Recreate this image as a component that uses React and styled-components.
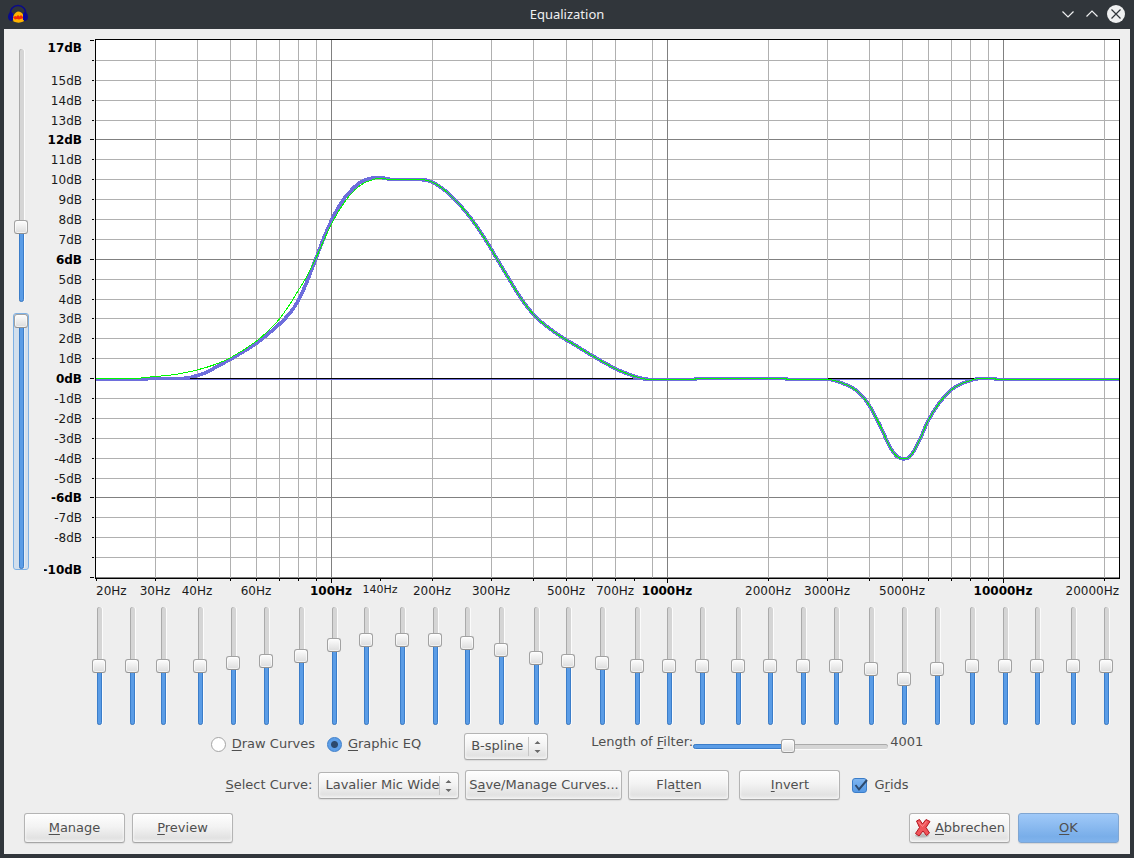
import React, { useState } from "react";
import styled, { createGlobalStyle, css } from "styled-components";

const GlobalStyle = createGlobalStyle`
  * { box-sizing: border-box; }
  body { margin: 0; background: #31363b; }
  body, button, select, input {
    font-family: "DejaVu Sans", sans-serif;
    font-size: 13px;
    line-height: 16px;
    color: #4f4f4f;
  }
  u { text-underline-offset: 2px; text-decoration-thickness: 1px; }
`;

/* ---------- window frame ---------- */

const Frame = styled.div`
  min-height: 100vh;
  display: flex;
  flex-direction: column;
  background: #31363b;
  padding: 0 4px 4px;
`;

const TitleBar = styled.header`
  height: 29px;
  display: grid;
  grid-template-columns: 1fr auto 1fr;
  align-items: center;
  padding: 0 4px 2px;
`;

const Title = styled.h1`
  margin: 0;
  font: 400 13px/20px "Noto Sans", sans-serif;
  color: #eff0f1;
`;

const WindowButtons = styled.div`
  display: flex;
  justify-content: flex-end;
  gap: 4px;
`;

const WindowButton = styled.button`
  width: 20px;
  height: 20px;
  padding: 0;
  border: 0;
  background: none;
  svg { display: block; }
`;

const Content = styled.main`
  flex: 1;
  display: flex;
  flex-direction: column;
  background: #eeeeee;
`;

/* ---------- sliders ---------- */

const thumb = css`
  appearance: none;
  width: 14px;
  height: 14px;
  border: 1px solid #a2a2a2;
  border-bottom-color: #929292;
  border-radius: 3px;
  background: linear-gradient(#fdfdfd, #dcdcdc);
  box-shadow: inset 0 0 0 1px rgba(255, 255, 255, 0.6);
`;

const SliderBox = styled.span`
  display: grid;
  width: ${(p) => (p.$vertical ? "14px" : p.$length)};
  height: ${(p) => (p.$vertical ? p.$length : "14px")};
  > * { grid-area: 1 / 1; }
  ${(p) =>
    p.$focused &&
    css`
      outline: 1px solid #7db0e4;
      border-radius: 2px;
      background: #d2dfed;
    `}
`;

const Groove = styled.span`
  display: flex;
  border-radius: 3px;
  background: #d5d5d5;
  ${(p) =>
    p.$vertical
      ? css`
          flex-direction: column;
          justify-content: flex-end;
          width: 5px;
          margin-left: 5px;
          box-shadow: inset 1px 0 0 #aaaaaa, 1px 0 0 ${p.$focused ? "#e4edf6" : "#fbfbfb"};
        `
      : css`
          height: 5px;
          margin-top: 5px;
          box-shadow: inset 0 1px 0 #aaaaaa, 0 1px 0 #fbfbfb;
        `}
`;

const Fill = styled.span`
  border: 1px solid #3b7dc9;
  border-radius: 3px;
  background: #5a9ce6;
`;

const Range = styled.input`
  appearance: none;
  margin: 0;
  padding: 0;
  background: none;
  outline: none;
  width: 100%;
  height: 100%;
  ${(p) => p.$vertical && css`writing-mode: vertical-lr; direction: rtl;`}
  &::-webkit-slider-runnable-track { appearance: none; background: none; }
  &::-webkit-slider-thumb { ${thumb} }
`;

function Slider({ id, label, min, max, initial, vertical = false, length, focused = false }) {
  const [value, setValue] = useState(initial);
  const percent = ((value - min) / (max - min)) * 100 + "%";
  return (
    <SliderBox $vertical={vertical} $length={length} $focused={focused}>
      <Groove $vertical={vertical} $focused={focused}>
        <Fill style={vertical ? { height: percent } : { width: percent }} />
      </Groove>
      <Range
        id={id}
        type="range"
        aria-label={label}
        $vertical={vertical}
        min={min}
        max={max}
        value={value}
        onChange={(e) => setValue(Number(e.target.value))}
      />
    </SliderBox>
  );
}

/* ---------- response chart ---------- */

const GraphArea = styled.section`
  display: flex;
  gap: 16px;
  padding: 7px 10px 0 10px;
`;

const RangeSliders = styled.div`
  display: flex;
  flex-direction: column;
  gap: 12px;
  padding-top: 13px;
`;

const ChartSvg = styled.svg`
  flex: 1;
  min-width: 0;
  display: block;
  height: auto;
  font-family: "DejaVu Sans", sans-serif;
  .crisp { shape-rendering: crispEdges; }
`;

const Tick = styled.text`
  font-size: ${(p) => (p.$small ? "11px" : "12px")};
  font-weight: ${(p) => (p.$major ? 700 : 400)};
  fill: ${(p) => (p.$major ? "#000" : "#1a1a1a")};
`;

const freqX = (f) => Math.floor(331.5 + 336 * (Math.log10(f) - 2));
const dbY = (db) => Math.round(40 + ((17 - db) * 537) / 27);

const DB_VALUES = Array.from({ length: 28 }, (_, i) => 17 - i);
const FREQUENCIES = [
  20, 30, 40, 50, 60, 70, 80, 90, 100, 200, 300, 400, 500, 600, 700, 900, 1000,
  2000, 3000, 4000, 5000, 6000, 7000, 8000, 9000, 10000, 20000,
];
const TICKS = FREQUENCIES.filter((f) => f !== 900).concat([140, 800]);
const MAJOR = [100, 1000, 10000];
const HZ_LABELS = [
  30, 40, 60, 100, 140, 200, 300, 500, 700, 1000, 2000, 3000, 5000, 10000,
];

const isMajorDb = (db) => db % 6 === 0 || db === 17 || db === -10;

const TAIL = [
  [392, 179.5], [420, 179.5], [432, 182], [445, 190.5], [458, 203], [470, 217],
  [485, 239], [500, 264], [515, 289], [525, 304], [535, 316], [545, 325],
  [560, 336], [575, 345], [592, 355.5], [615, 368.5], [628, 374], [640, 378],
  [650, 379.5], [694, 379.5], [697, 378.5], [783, 378.5], [790, 379.5],
  [828, 379.5], [842, 383], [857, 391], [869, 405], [880, 425.5], [890, 447],
  [897, 456.5], [904, 459], [910, 456.5], [915, 449], [921, 437],
  [928, 421], [939, 403.5], [951, 390], [962, 383.5],
  [972, 380], [980, 378.5], [994, 378.5], [997, 379.5], [1119, 379.5],
];
const DRAWN = [
  [96, 379.5], [143, 379.5], [150, 378.5], [180, 378.5], [190, 377.5],
  [205, 373], [217, 366.5], [230, 359.5], [256, 343.5], [279, 324.5],
  [290, 313], [298, 301], [306, 284], [315, 261], [323, 240], [331, 221.5],
  [338, 208], [345, 197.5], [352, 189.5], [360, 182.5], [370, 178.5],
  [380, 177.5], ...TAIL,
];
const ACTUAL = [
  [96, 378.5], [133, 378.5], [150, 377], [175, 374.5], [197, 370],
  [215, 364.5], [230, 358], [256, 341.5], [270, 329], [279, 319.5],
  [290, 304], [298, 291], [307, 276], [315, 260], [324, 240],
  [331, 225], [340, 209], [350, 195], [360, 185.5], [370, 180.5],
  [380, 178.5], ...TAIL,
];

function smoothPath(points) {
  let d = `M${points[0][0]} ${points[0][1]}`;
  const slope = (i) => {
    if (i === 0 || i === points.length - 1) return 0;
    const [x0, y0] = points[i - 1];
    const [x1, y1] = points[i];
    const [x2, y2] = points[i + 1];
    return (y1 - y0) * (y2 - y1) <= 0 ? 0 : (y2 - y0) / (x2 - x0);
  };
  for (let i = 0; i < points.length - 1; i++) {
    const [x1, y1] = points[i];
    const [x2, y2] = points[i + 1];
    const h = (x2 - x1) / 3;
    d += `C${x1 + h} ${y1 + slope(i) * h} ${x2 - h} ${y2 - slope(i + 1) * h} ${x2} ${y2}`;
  }
  return d;
}

/* The outermost labels are kept inside the plot's height. */
function dbBaseline(db) {
  if (db === 17) return 52;
  if (db === -10) return 574;
  return dbY(db) + 5;
}

function Chart() {
  return (
    <ChartSvg viewBox="44 36 1076 564" role="img" aria-label="Frequency response">
      <g className="crisp">
        <rect x="95" y="39" width="1025" height="540" fill="#000" />
        <rect x="96" y="40" width="1023" height="538" fill="#fff" />
        {DB_VALUES.filter((db) => db < 17).map((db) => (
          <rect key={db} x="96" y={dbY(db)} width="1023" height="1"
            fill={isMajorDb(db) ? "#808080" : "#b0b0b0"} />
        ))}
        {FREQUENCIES.filter((f) => f > 20).map((f) => (
          <rect key={f} x={freqX(f)} y="40" width="1" height="538"
            fill={MAJOR.includes(f) ? "#808080" : "#b0b0b0"} />
        ))}
        <rect x="96" y="379" width="1023" height="1" fill="#6e6edc" />
        {DB_VALUES.map((db) => (
          <rect key={db} x={isMajorDb(db) ? 90 : 92} y={dbY(db)}
            width={isMajorDb(db) ? 4 : 2} height="1" fill="#000" />
        ))}
        {TICKS.map((f) => (
          <rect key={f} x={freqX(f)} y="579" width="1"
            height={MAJOR.includes(f) ? 4 : 2} fill="#000" />
        ))}
        <path d={smoothPath(DRAWN)} fill="none" stroke="#6e6edc" strokeWidth="3.6" />
        <rect x="190" y="378" width="443" height="1" fill="#000" />
        <rect x="828" y="378" width="146" height="1" fill="#000" />
        <path d={smoothPath(ACTUAL)} fill="none" stroke="#00fa00" strokeWidth="1" />
      </g>
      {DB_VALUES.filter((db) => db !== 16 && db !== -9).map((db) => (
        <Tick key={db} x="82" y={dbBaseline(db)} textAnchor="end" $major={isMajorDb(db)}>
          {db}dB
        </Tick>
      ))}
      <Tick x="96" y="595">20Hz</Tick>
      {HZ_LABELS.map((f) => (
        <Tick key={f} x={freqX(f)} y={f === 140 ? 593 : 595} textAnchor="middle"
          $major={MAJOR.includes(f)} $small={f === 140}>
          {f}Hz
        </Tick>
      ))}
      <Tick x="1119" y="595" textAnchor="end">20000Hz</Tick>
    </ChartSvg>
  );
}

/* ---------- graphic EQ bands: frequency, gain, distance to the next ---------- */

const BANDS = [
  [20, 0, 33], [25, 0, 31], [31, 0, 37], [40, 0, 33], [50, 1, 33], [63, 2, 35],
  [80, 4, 33], [100, 8, 32], [125, 10, 36], [160, 10, 33], [200, 10, 32],
  [250, 9, 34], [315, 6, 35], [400, 3, 32], [500, 2, 34], [630, 1, 35],
  [800, 0, 32], [1000, 0, 33], [1250, 0, 36], [1600, 0, 32], [2000, 0, 33],
  [2500, 0, 33], [3150, 0, 35], [4000, -1, 33], [5000, -5, 33], [6300, -1, 35],
  [8000, 0, 33], [10000, 0, 32], [12500, 0, 36], [16000, 0, 33], [20000, 0, 0],
];

const BandRow = styled.section`
  display: grid;
  grid-template-columns: ${BANDS.slice(0, -1).map((b) => `minmax(0, ${b[2]}fr)`).join(" ")} 14px;
  padding: 7px 17px 1px 88px;
`;

/* ---------- controls ---------- */

const ControlRow = styled.div`
  display: flex;
  justify-content: center;
  align-items: center;
  white-space: nowrap;
  height: 30px;
  gap: ${(p) => p.$gap};
  margin-top: ${(p) => p.$top};
`;

const Group = styled.div`
  display: flex;
  align-items: center;
  gap: ${(p) => p.$gap};
`;

const ModeGroup = styled(Group)`
  padding-bottom: 4px;
`;

const InvertGroup = styled(Group)`
  padding-left: 4px;
`;

const ChoiceLabel = styled.label`
  display: flex;
  align-items: center;
  gap: 6px;
`;

const Radio = styled.input`
  appearance: none;
  width: 15px;
  height: 15px;
  margin: 0;
  border: 1px solid #a4a4a4;
  border-radius: 50%;
  background: #fff;
  &:checked {
    border-color: #3b7dc9;
    background: radial-gradient(circle, #2d4a6e 0 3px, #5e9fe8 4px);
  }
`;

const CheckWrap = styled.span`
  display: grid;
  > * { grid-area: 1 / 1; }
  svg { pointer-events: none; overflow: visible; }
`;

const Checkbox = styled.input`
  appearance: none;
  width: 15px;
  height: 15px;
  margin: 0;
  border: 1px solid #a4a4a4;
  border-radius: 3px;
  background: #fff;
  &:checked { border-color: #3b7dc9; background: linear-gradient(#7fb6f1, #5598e4); }
  &:not(:checked) + svg { display: none; }
`;

const raised = css`
  border: 1px solid #b4b4b4;
  border-bottom-color: #a6a6a6;
  border-radius: 3px;
  background: linear-gradient(#fefefe, #f3f3f3 45%, #e2e2e2 85%, #ececec);
  box-shadow: inset 0 0 3px #fff, 0 1px 1px rgba(0, 0, 0, 0.08);
`;

const Button = styled.button`
  ${raised}
  display: flex;
  align-items: center;
  justify-content: center;
  gap: 3px;
  height: 30px;
  width: ${(p) => p.$width || "101px"};
  padding: 0;
  white-space: nowrap;
  ${(p) =>
    p.$primary &&
    css`
      border-color: #80a6d2;
      background: linear-gradient(#a0c9f8, #79aee9 80%, #80b3ec);
      box-shadow: 0 1px 1px rgba(0, 0, 0, 0.1);
    `}
`;

const SelectWrap = styled.span`
  display: grid;
  align-items: center;
  width: ${(p) => p.$width};
  > * { grid-area: 1 / 1; }
  svg { justify-self: end; pointer-events: none; }
`;

const Select = styled.select`
  ${raised}
  appearance: none;
  width: 100%;
  height: 27px;
  margin: 0;
  padding: 0 0 0 6px;
`;

function ComboBox({ id, width, label, options }) {
  return (
    <SelectWrap $width={width}>
      <Select id={id} aria-label={label} defaultValue={options[0]}>
        {options.map((o) => <option key={o}>{o}</option>)}
      </Select>
      <svg width="21" height="21" viewBox="0 0 21 21">
        <path d="M1.500 1v19" stroke="#c6c6c6" />
        <path d="M7.500 8 10.500 5 13.500 8zM7.500 14 10.500 17 13.500 14z" fill="#6a6a6a" />
      </svg>
    </SelectWrap>
  );
}

const FilterLabel = styled.label`
  padding-bottom: 9px;
`;

const FilterValue = styled.output`
  padding: 0 0 9px 2px;
`;

const Footer = styled.footer`
  display: flex;
  justify-content: space-between;
  padding: 13px 11px 11px 20px;
`;

/* ---------- icons ---------- */

const AppIcon = () => (
  <svg width="22" height="20" viewBox="0 0 22 20" aria-hidden="true">
    <path d="M2.500 11C1.500 5 5.500 1.500 10 1.500S18.500 5 17.500 11" fill="none" stroke="#0b0b8c" strokeWidth="1.400" />
    <path d="M5.500 17.500c-1.500-4 .5-9 4.500-10 5 0 7 6 5.500 10-3 1.500-7 1.500-10 0z" fill="#ffb400" />
    <path d="M5 13.500l2-1.500 1.500.5L10 11l1.500 1.500L13 11l1.500 1.500 1.500 1-1.500 1-2 .5-1.500.5-2-.5-2 .5z" fill="#f0280a" />
    <path d="M4 8C1 8 0 11 0 13s1 4 4 4zM16 8c3 0 4 3 4 5s-1 4-4 4z" fill="#0b0b8c" />
    <path d="M4.500 9v7M15.500 9v7" stroke="#0505b8" />
  </svg>
);

const CancelIcon = () => (
  <svg width="18" height="20" viewBox="0 0 18 20" aria-hidden="true">
    <ellipse cx="8" cy="17.500" rx="7" ry="2" fill="#000" opacity=".18" />
    <path d="M2.500 3 5.500 1.500 8.500 6 12 1.500 16 3.500 12 9.500 15.500 15 12.500 17.500 9 13 5 18 1.500 15.500 5.500 9.500z"
      fill="#f0545a" stroke="#b3151f" strokeLinejoin="round" />
    <path d="M4.500 4 8.500 8.500 12.500 3.500" fill="none" stroke="#ff9a9a" opacity=".8" />
  </svg>
);

const TitleGlyph = ({ children }) => (
  <svg width="20" height="20" viewBox="0 0 20 20" aria-hidden="true">{children}</svg>
);

export default function App() {
  return (
    <>
      <GlobalStyle />
      <Frame>
        <TitleBar>
          <AppIcon />
          <Title>Equalization</Title>
          <WindowButtons>
            <WindowButton aria-label="Minimize">
              <TitleGlyph>
                <path d="M4.500 7.500 10 13l5.500-5.500" fill="none" stroke="#eff0f1" strokeWidth="1.200" />
              </TitleGlyph>
            </WindowButton>
            <WindowButton aria-label="Maximize">
              <TitleGlyph>
                <path d="M4.500 12.500 10 7l5.500 5.500" fill="none" stroke="#eff0f1" strokeWidth="1.200" />
              </TitleGlyph>
            </WindowButton>
            <WindowButton aria-label="Close">
              <TitleGlyph>
                <circle cx="10" cy="10" r="9" fill="#eff0f1" />
                <path d="M5.500 5.500l9 9M14.500 5.500l-9 9" stroke="#31363b" strokeWidth="1.200" />
              </TitleGlyph>
            </WindowButton>
          </WindowButtons>
        </TitleBar>

        <Content>
          <GraphArea>
            <RangeSliders>
              <Slider vertical label="Max dB" length="253px" min={0} max={60} initial={17} />
              <Slider vertical focused label="Min dB" length="255px" min={-120} max={-10} initial={-10} />
            </RangeSliders>
            <Chart />
          </GraphArea>

          <BandRow>
            {BANDS.map(([f, db]) => (
              <Slider key={f} vertical label={`${f} Hz`} length="118px" min={-20} max={20} initial={db} />
            ))}
          </BandRow>

          <ControlRow $top="5px" $gap="43px">
            <ModeGroup $gap="12px">
              <ChoiceLabel>
                <Radio type="radio" name="mode" />
                <span><u>D</u>raw Curves</span>
              </ChoiceLabel>
              <ChoiceLabel>
                <Radio type="radio" name="mode" defaultChecked />
                <span><u>G</u>raphic EQ</span>
              </ChoiceLabel>
            </ModeGroup>
            <ComboBox width="84px" label="Interpolation" options={["B-spline", "Cosine", "Cubic"]} />
            <Group $gap="0">
              <FilterLabel htmlFor="filter-length">Length of <u>F</u>ilter:</FilterLabel>
              <Slider id="filter-length" length="195px" min={10} max={4095} initial={2000} />
              <FilterValue htmlFor="filter-length">4001</FilterValue>
            </Group>
          </ControlRow>

          <ControlRow $top="9px" $gap="6px">
            <label htmlFor="curve"><u>S</u>elect Curve:</label>
            <ComboBox id="curve" width="141px" options={["Lavalier Mic Wide", "unnamed"]} />
            <Button $width="157px"><span>S<u>a</u>ve/Manage Curves...</span></Button>
            <Button><span>Fla<u>t</u>ten</span></Button>
            <InvertGroup $gap="12px">
              <Button><span><u>I</u>nvert</span></Button>
              <ChoiceLabel>
                <CheckWrap>
                  <Checkbox type="checkbox" defaultChecked />
                  <svg width="16" height="15" viewBox="0 0 16 15">
                    <path d="M3.500 7 7 11.500 15 2" fill="none" stroke="#2d4a6e" strokeWidth="2" />
                  </svg>
                </CheckWrap>
                <span>G<u>r</u>ids</span>
              </ChoiceLabel>
            </InvertGroup>
          </ControlRow>

          <Footer>
            <Group $gap="7px">
              <Button><span><u>M</u>anage</span></Button>
              <Button><span><u>P</u>review</span></Button>
            </Group>
            <Group $gap="8px">
              <Button><CancelIcon /><span><u>A</u>bbrechen</span></Button>
              <Button $primary><span><u>O</u>K</span></Button>
            </Group>
          </Footer>
        </Content>
      </Frame>
    </>
  );
}
